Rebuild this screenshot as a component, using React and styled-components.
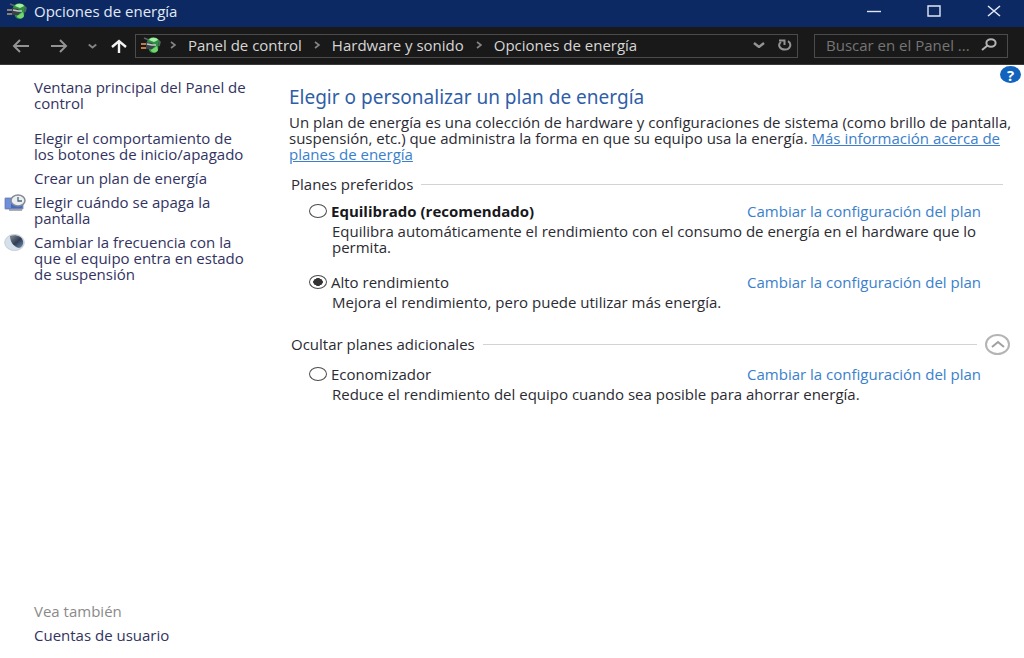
import React, { useState } from "react";
import styled, { createGlobalStyle } from "styled-components";

const GlobalStyle = createGlobalStyle`
  * {
    box-sizing: border-box;
  }
  body {
    margin: 0;
    background: #fff;
    color: #2b2b33;
    font-family: "Open Sans", "Noto Sans", sans-serif;
    font-size: 15px;
    line-height: 16px;
  }
  button, input {
    font: inherit;
    color: inherit;
    margin: 0;
  }
  svg {
    display: block;
    flex: none;
  }
`;

// Window
const Window = styled.div`
  min-height: 100vh;
  display: flex;
  flex-direction: column;
`;

const TitleBar = styled.header`
  height: 27px;
  padding: 0 16px 5px 6px;
  display: flex;
  align-items: center;
  gap: 6px;
  background: #0c2963;
  color: #e3e9f4;
`;

const WindowTitle = styled.span`
  flex: 1;
`;

const WindowButtons = styled.div`
  display: flex;
  gap: 32px;
`;

const IconButton = styled.button`
  display: flex;
  align-items: center;
  justify-content: center;
  width: ${({ $width }) => $width}px;
  padding: 0;
  border: none;
  background: none;
`;

// Navigation bar
const NavBar = styled.nav`
  height: 38px;
  padding: 0 16px 0 12px;
  display: flex;
  align-items: center;
  gap: 16px;
  background: #191919;
  border-bottom: 1px solid #3a3a3a;
`;

const NavButtons = styled.div`
  display: flex;
  align-items: center;
  gap: 15px;
  margin-right: -8px;
`;

const AddressBar = styled.div`
  flex: 1;
  height: 24px;
  padding: 0 4px 2px;
  display: flex;
  align-items: center;
  gap: 8px;
  border: 1px solid #4b4b4b;
  color: #d6d6d6;
`;

const Crumbs = styled.div`
  flex: 1;
  display: flex;
  align-items: center;
  gap: 12px;
`;

const Crumb = styled.a`
  color: inherit;
  text-decoration: none;
`;

const SearchBox = styled.label`
  width: 194px;
  height: 24px;
  padding: 0 10px 2px 11px;
  display: flex;
  align-items: center;
  border: 1px solid #4b4b4b;
`;

const SearchInput = styled.input`
  flex: 1;
  min-width: 0;
  padding: 0;
  border: none;
  outline: none;
  background: none;
  color: #d6d6d6;
  &::placeholder {
    color: #757575;
    opacity: 1;
  }
`;

// Body
const Body = styled.div`
  flex: 1;
  display: flex;
`;

const Sidebar = styled.aside`
  width: 272px;
  flex: none;
  padding: 14px 24px 15px 4px;
  display: flex;
  flex-direction: column;
  gap: 8px;
`;

const SideLinks = styled.div`
  margin-top: 11px;
  flex: 1;
  display: flex;
  flex-direction: column;
  gap: 8px;
`;

const SideItem = styled.div`
  display: grid;
  grid-template-columns: 22px 1fr;
  gap: 8px;
`;

const SideLink = styled.a`
  grid-column: 2;
  grid-row: 1;
  color: #33335f;
  text-decoration: none;
`;

const SideNote = styled.span`
  grid-column: 2;
  color: #8a8a8a;
`;

const Main = styled.main`
  flex: 1;
  min-width: 0;
  padding: 0 8px 0 17px;
`;

const Heading = styled.h1`
  margin: 0 0 5px;
  padding-top: 20px;
  font-family: "Noto Sans", sans-serif;
  font-size: 19px;
  line-height: 24px;
  font-weight: 400;
  color: #2f5ea8;
`;

const Intro = styled.p`
  margin: 0;
`;

const InfoLink = styled.a`
  color: #3a80cc;
`;

const HelpButton = styled.button`
  position: absolute;
  top: 66px;
  right: 3px;
  width: 21px;
  height: 17px;
  padding: 0;
  border: none;
  border-radius: 50%;
  background: #1263bd;
  color: #fff;
  font-weight: 700;
  line-height: 16px;
`;

const GroupHeader = styled.div`
  display: flex;
  align-items: center;
  gap: 8px;
  height: 22px;
  padding-left: 2px;
  margin-top: ${({ $top }) => $top}px;
  margin-right: ${({ $collapsible }) => ($collapsible ? 6 : 13)}px;
`;

const GroupTitle = styled.h2`
  margin: 0;
  font-size: 15px;
  font-weight: 400;
`;

const Rule = styled.div`
  flex: 1;
  height: 1px;
  background: #d2d2d2;
`;

const Collapse = styled.button`
  width: 25px;
  height: 21px;
  padding: 0;
  display: flex;
  align-items: center;
  justify-content: center;
  border: 2px solid #b4b4b4;
  border-radius: 50%;
  background: #fff;
`;

const Plans = styled.div`
  display: flex;
  flex-direction: column;
  gap: 19px;
  padding: ${({ $top }) => $top}px 35px 0 20px;
`;

const PlanRow = styled.div`
  display: flex;
  justify-content: space-between;
`;

const PlanLabel = styled.label`
  display: flex;
  align-items: center;
  gap: 4px;
  color: ${({ $bold }) => ($bold ? "#17171c" : "inherit")};
  font-weight: ${({ $bold }) => ($bold ? 700 : 400)};
`;

const Radio = styled.input`
  appearance: none;
  width: 18px;
  height: 14px;
  border: 1px solid #4c4c4c;
  border-radius: 50%;
  background: #fff;
  &:checked {
    background: radial-gradient(ellipse 5px 4px, #333 90%, #fff 100%);
  }
`;

const PlanText = styled.p`
  margin: 4px 0 0 23px;
`;

const PlanLink = styled.a`
  color: #3a80cc;
  text-decoration: none;
`;

// Icons
const PowerIcon = ({ plug = "#8b8078" }) => (
  <svg width="22" height="18" viewBox="0 0 22 18">
    <path d="M4 2l5 2M18 4l2 2-1 4" stroke="#59616b" strokeWidth="1.6" fill="none" />
    <path d="M7 6c1-6 11-6 12-1l-1 9c-1 4-8 4-9 0z" fill="#2d9140" />
    <path d="M9 4c1-3 8-3 9 0l-4 2z" fill="#a9efa7" />
    <path d="M11 14l6-4 1 4c-1 3-5 3-7 1z" fill="#75d66d" />
    <path d="M1 8h6M1 12h6" stroke={plug} strokeWidth="1.8" />
    <path d="M6 6l6 1 3 3-3 3H6z" fill="#3b434a" />
    <path d="M7 8l5 1h4" stroke="#c3cac6" strokeWidth="1.6" fill="none" />
  </svg>
);

const ArrowIcon = ({ right }) => (
  <svg width="18" height="14" viewBox="0 0 18 14" fill="none" stroke="#939393" strokeWidth="2">
    <path d={right ? "M1 7h15M10 1l6 6-6 6" : "M17 7H2M8 1L2 7l6 6"} />
  </svg>
);

const UpIcon = () => (
  <svg width="16" height="14" viewBox="0 0 16 14" fill="none" stroke="#f4f4f4" strokeWidth="2.4">
    <path d="M8 14V2M1 8l7-6 7 6" />
  </svg>
);

const ChevronDown = ({ width, color }) => (
  <svg width={width} height="6" viewBox="0 0 12 6" fill="none" stroke={color} strokeWidth="2.4">
    <path d="M1 1l5 4 5-4" />
  </svg>
);

const CrumbArrow = () => (
  <svg width="6" height="8" viewBox="0 0 6 8" fill="none" stroke="#858585" strokeWidth="1.6">
    <path d="M1 1l4 3-4 3" />
  </svg>
);

const RefreshIcon = () => (
  <svg width="14" height="12" viewBox="0 0 14 12" fill="none" stroke="#949494" strokeWidth="2">
    <path d="M10 2.2c4 2.4 2.6 8.3-3 8.3S-.6 5.6 3 3" />
    <path d="M1 1.5h5.5V6" />
  </svg>
);

const SearchIcon = () => (
  <svg width="16" height="13" viewBox="0 0 16 13" fill="none" stroke="#b5b5b5" strokeWidth="2">
    <ellipse cx="10" cy="5" rx="4.6" ry="3.8" />
    <path d="M6.5 7.5L1 12" />
  </svg>
);

const DisplayIcon = () => (
  <svg width="22" height="18" viewBox="0 0 22 18">
    <path d="M1 4h18v11H1z" fill="#4569bd" stroke="#8b9bc4" />
    <path d="M2 5h5v9H2z" fill="#6f8fdc" />
    <path d="M5 16h13" stroke="#8c8c92" strokeWidth="1.4" />
    <ellipse cx="14" cy="6.5" rx="7" ry="5.5" fill="#e9eff3" stroke="#848b94" strokeWidth="1.5" />
    <path d="M14 3v4h4" stroke="#536574" strokeWidth="1.3" fill="none" />
  </svg>
);

const SleepIcon = () => (
  <svg width="22" height="18" viewBox="0 0 22 18">
    <defs>
      <linearGradient id="moon" x1="0.2" y1="0.1" x2="0.9" y2="0.9">
        <stop offset="0" stopColor="#6f7883" />
        <stop offset="0.5" stopColor="#2f3d55" />
        <stop offset="1" stopColor="#66809f" />
      </linearGradient>
    </defs>
    <ellipse cx="10.5" cy="8.5" rx="9.8" ry="8" fill="#d4e1ec" stroke="#c5ccd3" />
    <path d="M6 2c5-2 12 0 13 5 1 4-2 7-4 7-5-1-9-6-9-12z" fill="url(#moon)" />
  </svg>
);

const sideLinks = [
  { text: "Elegir el comportamiento de los botones de inicio/apagado" },
  { text: "Crear un plan de energía" },
  { text: "Elegir cuándo se apaga la pantalla", icon: <DisplayIcon /> },
  {
    text: "Cambiar la frecuencia con la que el equipo entra en estado de suspensión",
    icon: <SleepIcon />,
  },
];

const preferredPlans = [
  {
    id: "balanced",
    name: "Equilibrado (recomendado)",
    bold: true,
    text: "Equilibra automáticamente el rendimiento con el consumo de energía en el hardware que lo permita.",
  },
  {
    id: "high",
    name: "Alto rendimiento",
    text: "Mejora el rendimiento, pero puede utilizar más energía.",
  },
];

const extraPlans = [
  {
    id: "saver",
    name: "Economizador",
    text: "Reduce el rendimiento del equipo cuando sea posible para ahorrar energía.",
  },
];

const PlanList = ({ plans, top, selected, onSelect }) => (
  <Plans $top={top}>
    {plans.map((plan) => (
      <div key={plan.id}>
        <PlanRow>
          <PlanLabel $bold={plan.bold}>
            <Radio
              type="radio"
              name="plan"
              checked={selected === plan.id}
              onChange={() => onSelect(plan.id)}
            />
            {plan.name}
          </PlanLabel>
          <PlanLink href="#">Cambiar la configuración del plan</PlanLink>
        </PlanRow>
        <PlanText>{plan.text}</PlanText>
      </div>
    ))}
  </Plans>
);

const App = () => {
  const [selected, setSelected] = useState("high");
  const [expanded, setExpanded] = useState(true);

  return (
    <Window>
      <GlobalStyle />
      <TitleBar>
        <PowerIcon />
        <WindowTitle>Opciones de energía</WindowTitle>
        <WindowButtons>
          <IconButton $width={28} aria-label="Minimizar">
            <svg width="14" height="12" viewBox="0 0 14 12" stroke="#dfe7f5" strokeWidth="1.4">
              <path d="M0 6.5h14" />
            </svg>
          </IconButton>
          <IconButton $width={28} aria-label="Maximizar">
            <svg width="14" height="12" viewBox="0 0 14 12" fill="none" stroke="#dfe7f5" strokeWidth="1.4">
              <path d="M1 1h12v10H1z" />
            </svg>
          </IconButton>
          <IconButton $width={28} aria-label="Cerrar">
            <svg width="14" height="12" viewBox="0 0 14 12" stroke="#dfe7f5" strokeWidth="1.6">
              <path d="M1 1l12 10M13 1L1 11" />
            </svg>
          </IconButton>
        </WindowButtons>
      </TitleBar>

      <NavBar>
        <NavButtons>
          <IconButton $width={18} aria-label="Atrás">
            <ArrowIcon />
          </IconButton>
          <IconButton $width={28} aria-label="Adelante">
            <ArrowIcon right />
          </IconButton>
          <IconButton $width={8} aria-label="Recientes">
            <ChevronDown width={9} color="#858585" />
          </IconButton>
          <IconButton $width={16} aria-label="Arriba">
            <UpIcon />
          </IconButton>
        </NavButtons>
        <AddressBar>
          <PowerIcon plug="#c07a45" />
          <Crumbs>
            <CrumbArrow />
            <Crumb href="#">Panel de control</Crumb>
            <CrumbArrow />
            <Crumb href="#">Hardware y sonido</Crumb>
            <CrumbArrow />
            <Crumb href="#">Opciones de energía</Crumb>
          </Crumbs>
          <IconButton $width={20} aria-label="Ubicaciones anteriores">
            <ChevronDown width={12} color="#949494" />
          </IconButton>
          <IconButton $width={16} aria-label="Actualizar">
            <RefreshIcon />
          </IconButton>
        </AddressBar>
        <SearchBox>
          <SearchInput aria-label="Buscar" placeholder="Buscar en el Panel ..." />
          <SearchIcon />
        </SearchBox>
      </NavBar>

      <Body>
        <Sidebar>
          <SideItem>
            <SideLink href="#">Ventana principal del Panel de control</SideLink>
          </SideItem>
          <SideLinks>
            {sideLinks.map((link) => (
              <SideItem key={link.text}>
                {link.icon}
                <SideLink href="#">{link.text}</SideLink>
              </SideItem>
            ))}
          </SideLinks>
          <SideItem>
            <SideNote>Vea también</SideNote>
          </SideItem>
          <SideItem>
            <SideLink href="#">Cuentas de usuario</SideLink>
          </SideItem>
        </Sidebar>

        <Main>
          <HelpButton aria-label="Ayuda">?</HelpButton>
          <Heading>Elegir o personalizar un plan de energía</Heading>
          <Intro>
            Un plan de energía es una colección de hardware y configuraciones de
            sistema (como brillo de pantalla, suspensión, etc.) que administra la
            forma en que su equipo usa la energía.{" "}
            <InfoLink href="#">Más información acerca de planes de energía</InfoLink>
          </Intro>

          <GroupHeader $top={11}>
            <GroupTitle>Planes preferidos</GroupTitle>
            <Rule />
          </GroupHeader>
          <PlanList plans={preferredPlans} top={8} selected={selected} onSelect={setSelected} />

          <GroupHeader $top={23} $collapsible>
            <GroupTitle>Ocultar planes adicionales</GroupTitle>
            <Rule />
            <Collapse aria-label="Ocultar planes" onClick={() => setExpanded(!expanded)}>
              <svg width="14" height="8" viewBox="0 0 14 8" fill="none" stroke="#a0a0a0" strokeWidth="2">
                <path d="M1 7l6-5 6 5" />
              </svg>
            </Collapse>
          </GroupHeader>
          {expanded && (
            <PlanList plans={extraPlans} top={11} selected={selected} onSelect={setSelected} />
          )}
        </Main>
      </Body>
    </Window>
  );
};

export default App;
